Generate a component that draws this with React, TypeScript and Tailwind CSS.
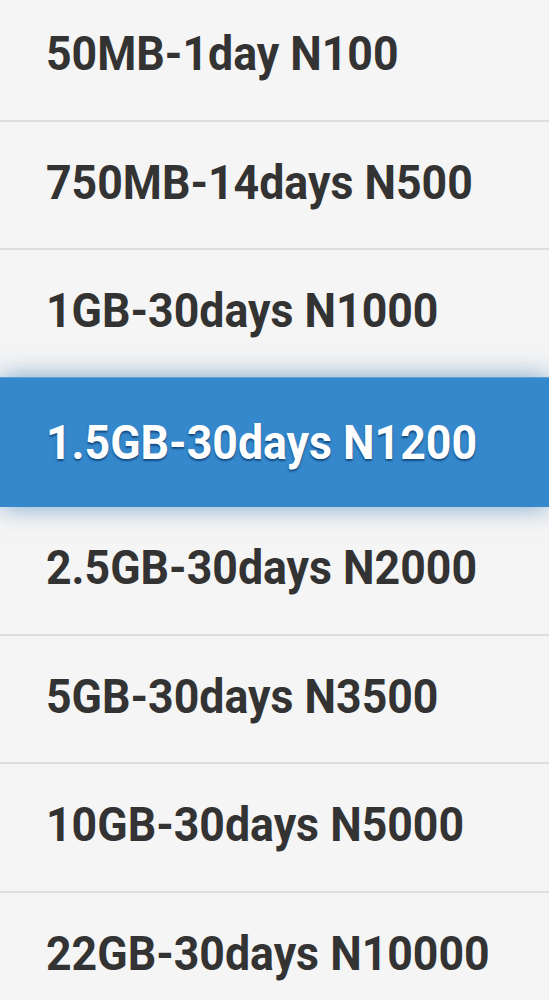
const plans = [
  "50MB-1day N100",
  "750MB-14days N500",
  "1GB-30days N1000",
  "1.5GB-30days N1200",
  "2.5GB-30days N2000",
  "5GB-30days N3500",
  "10GB-30days N5000",
  "22GB-30days N10000",
];

const selected = 3;

export default function App() {
  return (
    <div className="h-screen w-full overflow-hidden bg-[#f5f5f5] font-['Roboto',sans-serif]">
      <ul className="-mt-[7px]">
        {plans.map((plan, idx) =>
          idx === selected ? (
            <li
              key={plan}
              className="relative z-10 -mt-[1.5px] flex h-[130px] items-center border-t border-[#5a9fd8] bg-[#3588cc] pl-[46px] shadow-[0_0_24px_rgba(40,110,175,0.6)]"
            >
              <span className="origin-left scale-x-[0.93] text-[48px] font-bold leading-none text-white [text-shadow:0_2px_2px_rgba(18,68,120,0.9)]">
                {plan}
              </span>
            </li>
          ) : (
            <li
              key={plan}
              className="flex h-[128.5px] items-center border-b-[2.5px] border-[#dedede] pb-[4px] pl-[46px]"
            >
              <span className="origin-left scale-x-[0.93] text-[48px] font-bold leading-none text-[#333333]">
                {plan}
              </span>
            </li>
          )
        )}
      </ul>
    </div>
  );
}
